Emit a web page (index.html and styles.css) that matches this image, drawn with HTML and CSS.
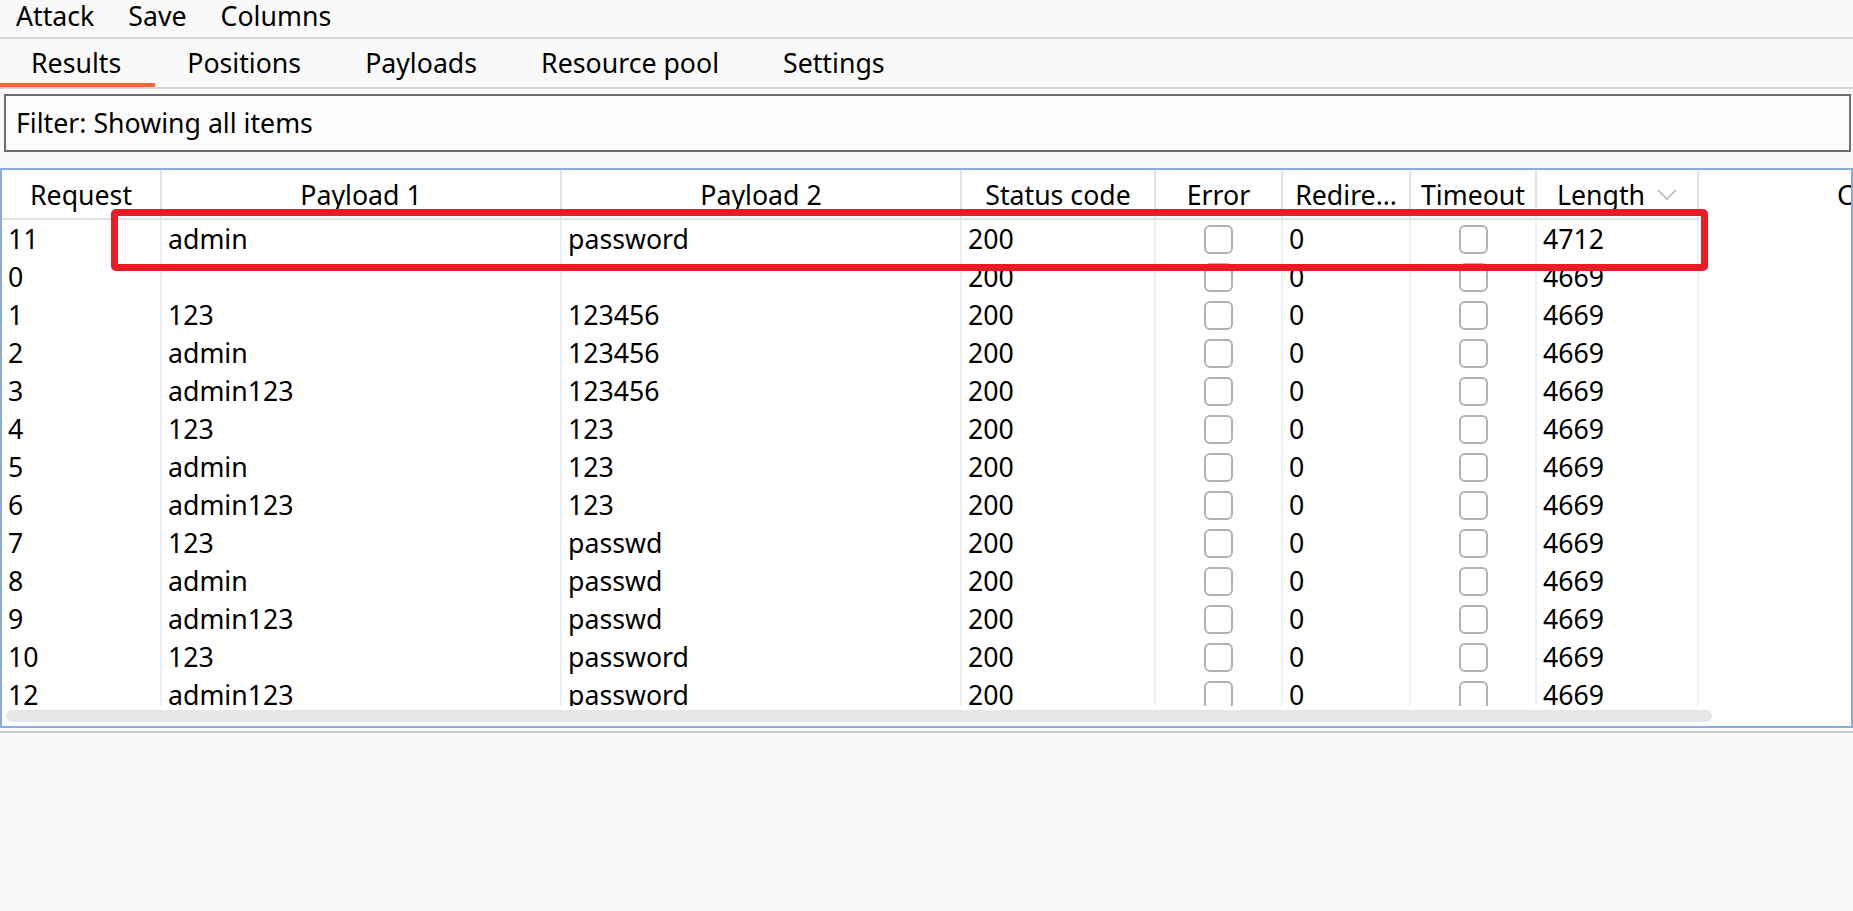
FILE: index.html
```html
<!DOCTYPE html>
<html>
<head>
<meta charset="utf-8">
<link rel="stylesheet" href="styles.css">
</head>
<body>
<div class="menubar">
  <span class="menu-item">Attack</span>
  <span class="menu-item">Save</span>
  <span class="menu-item">Columns</span>
</div>
<div class="tabbar">
  <span class="tab active">Results</span>
  <span class="tab">Positions</span>
  <span class="tab">Payloads</span>
  <span class="tab">Resource pool</span>
  <span class="tab">Settings</span>
</div>
<div class="filter">Filter: Showing all items</div>
<div class="panel">
  <div class="grid head">
    <div class="h">Request</div>
    <div class="h">Payload 1</div>
    <div class="h">Payload 2</div>
    <div class="h">Status code</div>
    <div class="h">Error</div>
    <div class="h">Redire…</div>
    <div class="h">Timeout</div>
    <div class="h">Length<svg class="sort" width="20" height="11" viewBox="0 0 20 11"><path d="M1 1 L10 10 L19 1" fill="none" stroke="#b5b5b5" stroke-width="1.6"/></svg></div>
    <div class="h">Comment</div>
  </div>
  <div class="rows">
    <div class="grid row"><div class="c">11</div><div class="c">admin</div><div class="c">password</div><div class="c">200</div><div class="c cb"><span class="box"></span></div><div class="c">0</div><div class="c cb"><span class="box"></span></div><div class="c">4712</div><div class="c"></div></div>
    <div class="grid row"><div class="c">0</div><div class="c"></div><div class="c"></div><div class="c">200</div><div class="c cb"><span class="box"></span></div><div class="c">0</div><div class="c cb"><span class="box"></span></div><div class="c">4669</div><div class="c"></div></div>
    <div class="grid row"><div class="c">1</div><div class="c">123</div><div class="c">123456</div><div class="c">200</div><div class="c cb"><span class="box"></span></div><div class="c">0</div><div class="c cb"><span class="box"></span></div><div class="c">4669</div><div class="c"></div></div>
    <div class="grid row"><div class="c">2</div><div class="c">admin</div><div class="c">123456</div><div class="c">200</div><div class="c cb"><span class="box"></span></div><div class="c">0</div><div class="c cb"><span class="box"></span></div><div class="c">4669</div><div class="c"></div></div>
    <div class="grid row"><div class="c">3</div><div class="c">admin123</div><div class="c">123456</div><div class="c">200</div><div class="c cb"><span class="box"></span></div><div class="c">0</div><div class="c cb"><span class="box"></span></div><div class="c">4669</div><div class="c"></div></div>
    <div class="grid row"><div class="c">4</div><div class="c">123</div><div class="c">123</div><div class="c">200</div><div class="c cb"><span class="box"></span></div><div class="c">0</div><div class="c cb"><span class="box"></span></div><div class="c">4669</div><div class="c"></div></div>
    <div class="grid row"><div class="c">5</div><div class="c">admin</div><div class="c">123</div><div class="c">200</div><div class="c cb"><span class="box"></span></div><div class="c">0</div><div class="c cb"><span class="box"></span></div><div class="c">4669</div><div class="c"></div></div>
    <div class="grid row"><div class="c">6</div><div class="c">admin123</div><div class="c">123</div><div class="c">200</div><div class="c cb"><span class="box"></span></div><div class="c">0</div><div class="c cb"><span class="box"></span></div><div class="c">4669</div><div class="c"></div></div>
    <div class="grid row"><div class="c">7</div><div class="c">123</div><div class="c">passwd</div><div class="c">200</div><div class="c cb"><span class="box"></span></div><div class="c">0</div><div class="c cb"><span class="box"></span></div><div class="c">4669</div><div class="c"></div></div>
    <div class="grid row"><div class="c">8</div><div class="c">admin</div><div class="c">passwd</div><div class="c">200</div><div class="c cb"><span class="box"></span></div><div class="c">0</div><div class="c cb"><span class="box"></span></div><div class="c">4669</div><div class="c"></div></div>
    <div class="grid row"><div class="c">9</div><div class="c">admin123</div><div class="c">passwd</div><div class="c">200</div><div class="c cb"><span class="box"></span></div><div class="c">0</div><div class="c cb"><span class="box"></span></div><div class="c">4669</div><div class="c"></div></div>
    <div class="grid row"><div class="c">10</div><div class="c">123</div><div class="c">password</div><div class="c">200</div><div class="c cb"><span class="box"></span></div><div class="c">0</div><div class="c cb"><span class="box"></span></div><div class="c">4669</div><div class="c"></div></div>
    <div class="grid row"><div class="c">12</div><div class="c">admin123</div><div class="c">password</div><div class="c">200</div><div class="c cb"><span class="box"></span></div><div class="c">0</div><div class="c cb"><span class="box"></span></div><div class="c">4669</div><div class="c"></div></div>
  </div>
  <div class="hscroll"><div class="thumb"></div></div>
</div>
<div class="bottomline"></div>
<div class="highlight"></div>
</body>
</html>
```
FILE: styles.css
```css
html, body {
  margin: 0;
  padding: 0;
  background: #f9f9f9;
  font-family: "Noto Sans", "Open Sans", sans-serif;
  font-size: 26.7px;
  color: #000;
  width: 1853px;
  height: 911px;
  overflow: hidden;
}

.menubar {
  display: flex;
  height: 37px;
  line-height: 32px;
  padding-left: 16px;
  gap: 34px;
  border-bottom: 2px solid #d4d4d4;
  box-sizing: content-box;
}

.tabbar {
  display: flex;
  border-bottom: 2px solid #d4d4d4;
}

.tab {
  padding: 3px 32px 0 32px;
  line-height: 41px;
  border-bottom: 4px solid transparent;
}

.tab.active {
  padding-left: 31px;
  padding-right: 34px;
  border-bottom-color: #ff6633;
}

.filter {
  margin: 5px 2px 0 4px;
  height: 54px;
  line-height: 54px;
  border: 2px solid #6d6d6d;
  background: #fcfcfc;
  padding-left: 10px;
}

.panel {
  margin-top: 16px;
  border: 2px solid #8bacd8;
  background: #ffffff;
  overflow: hidden;
  width: 1849px;
}

.grid {
  display: grid;
  grid-template-columns: 160px 400px 400px 194px 127px 128px 126px 162px 400px;
  width: 1697px;
}

.head {
  height: 48px;
  border-bottom: 2px solid #e2e2e2;
}

.h {
  display: flex;
  align-items: center;
  justify-content: center;
  gap: 12px;
  padding-top: 2px;
  line-height: 46px;
  border-right: 2px solid #e2e2e2;
  white-space: nowrap;
}

.h:last-child {
  border-right: none;
}

.sort {
  display: block;
  margin-top: -2px;
}

.rows {
  height: 486px;
  overflow: hidden;
}

.row {
  height: 38px;
}

.c {
  line-height: 38px;
  padding-left: 6px;
  border-right: 2px solid #f0f0f0;
  white-space: nowrap;
  overflow: hidden;
}

.c:last-child {
  border-right: none;
}

.cb {
  display: flex;
  align-items: center;
  justify-content: center;
  padding-left: 0;
}

.box {
  display: block;
  width: 25px;
  height: 25px;
  border: 2px solid #b2b2b2;
  border-radius: 6px;
  background: #fff;
}

.hscroll {
  height: 20px;
  padding-top: 4px;
  box-sizing: border-box;
}

.thumb {
  margin-left: 4px;
  width: 1706px;
  height: 12px;
  border-radius: 6px;
  background: #e6e6e6;
}

.bottomline {
  margin-top: 3px;
  height: 2px;
  background: #cccccc;
}

.highlight {
  position: absolute;
  left: 111px;
  top: 209px;
  width: 1583px;
  height: 48px;
  border: 7px solid #ed1c24;
  border-radius: 5px;
}
```
